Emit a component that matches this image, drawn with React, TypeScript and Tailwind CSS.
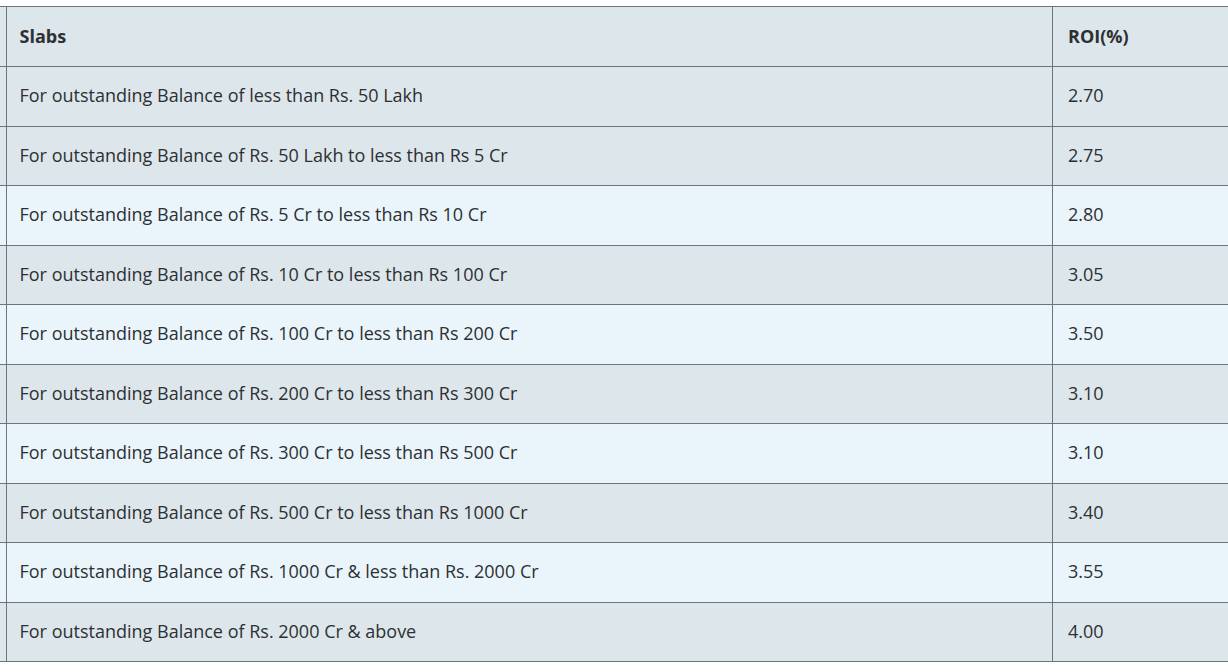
const rows: [string, string][] = [
  ['For outstanding Balance of less than Rs. 50 Lakh', '2.70'],
  ['For outstanding Balance of Rs. 50 Lakh to less than Rs 5 Cr', '2.75'],
  ['For outstanding Balance of Rs. 5 Cr to less than Rs 10 Cr', '2.80'],
  ['For outstanding Balance of Rs. 10 Cr to less than Rs 100 Cr', '3.05'],
  ['For outstanding Balance of Rs. 100 Cr to less than Rs 200 Cr', '3.50'],
  ['For outstanding Balance of Rs. 200 Cr to less than Rs 300 Cr', '3.10'],
  ['For outstanding Balance of Rs. 300 Cr to less than Rs 500 Cr', '3.10'],
  ['For outstanding Balance of Rs. 500 Cr to less than Rs 1000 Cr', '3.40'],
  ['For outstanding Balance of Rs. 1000 Cr & less than Rs. 2000 Cr', '3.55'],
  ['For outstanding Balance of Rs. 2000 Cr & above', '4.00'],
];

// light rows in the reference: 3rd, 5th, 7th, 9th
const isLight = (i: number) => i >= 2 && i % 2 === 0;

export default function App() {
  return (
    <div className="w-[1228px] h-[672px] overflow-hidden bg-white pt-[6px] text-[#2d3033] font-['Open_Sans',sans-serif] text-[18px]">
      <table className="w-[1240px] border-collapse">
        <thead>
          <tr className="bg-[#dde6eb]">
            <td className="w-[6px] h-[60px] p-0 border-y border-[#6c757b]" />
            <td className="h-[60px] pl-[13px] pb-[1px] border border-[#6c757b] font-bold">Slabs</td>
            <td className="w-[187px] h-[60px] pl-[15px] pb-[1px] border border-[#6c757b] font-bold">ROI(%)</td>
          </tr>
        </thead>
        <tbody>
          {rows.map(([slab, roi], i) => (
            <tr key={i} className={isLight(i) ? 'bg-[#e9f5fb]' : 'bg-[#dde6eb]'}>
              <td className="w-[6px] h-[59.5px] p-0 border-y border-[#6c757b]" />
              <td className="h-[59.5px] pl-[13px] pb-[1px] border border-[#6c757b]">{slab}</td>
              <td className="h-[59.5px] pl-[15px] pb-[1px] border border-[#6c757b]">{roi}</td>
            </tr>
          ))}
        </tbody>
      </table>
    </div>
  );
}
